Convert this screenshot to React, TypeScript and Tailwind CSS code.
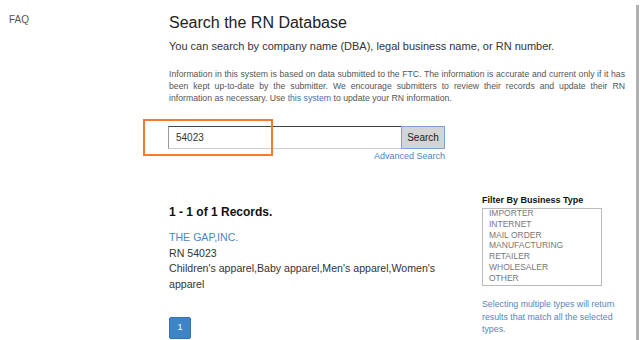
import React from "react"

const types = ["IMPORTER", "INTERNET", "MAIL ORDER", "MANUFACTURING", "RETAILER", "WHOLESALER", "OTHER"]

const App = () => {
  return (
    <div className="relative flex w-[640px] h-[340px] overflow-hidden bg-white font-['Liberation_Sans',Arial,sans-serif]">
      {/* SIDEBAR */}
      <div className="w-[169px] shrink-0 pl-[9px] pt-[6px]">
        <a className="text-[10px] text-[#555]">FAQ</a>
      </div>

      {/* MAIN */}
      <div className="w-[456px] shrink-0 flex flex-col">
        <h1 className="mt-[13px] text-[16px] leading-[20px] text-[#222]">Search the RN Database</h1>
        <p className="mt-[6px] text-[11px] leading-[15px] text-[#333]">
          You can search by company name (DBA), legal business name, or RN number.
        </p>
        <p className="mt-[14px] text-[8.7px] leading-[12px] text-[#555] text-justify">
          Information in this system is based on data submitted to the FTC. The information is accurate and current
          only if it has been kept up-to-date by the submitter. We encourage submitters to review their records and
          update their RN information as necessary. Use <a className="text-[#3d72b4]">this system</a> to update your
          RN information.
        </p>

        {/* SEARCH */}
        <div className="relative mt-[22px] ml-[-1px] w-[277px]">
          <div className="flex h-[23px]">
            <input
              readOnly
              value="54023"
              className="w-[233px] h-full px-[7px] text-[10px] text-[#333] border border-t-[#444] border-l-[#999] border-b-[#ccc] border-r-0 outline-none"
            />
            <button className="w-[44px] h-full bg-[#d4d4d4] border border-[#7d9fd6] text-[10px] text-[#222]">
              Search
            </button>
          </div>
          <div className="text-right text-[9px] leading-[14px] text-[#4a86c5]">Advanced Search</div>
          {/* highlight */}
          <div className="absolute left-[-25px] top-[-7px] w-[130px] h-[37px] border-2 border-[#f47c30]" />
        </div>

        {/* RESULTS + FILTER */}
        <div className="flex mt-[30px]">
          <div className="w-[313px] shrink-0 pr-[30px] pt-[11px]">
            <h2 className="text-[12px] leading-[16px] font-bold text-[#111]">1 - 1 of 1 Records.</h2>
            <div className="mt-[10px] text-[10.6px] leading-[15.5px] text-[#333]">
              <a className="block text-[#4a86c5]">THE GAP,INC.</a>
              <div>RN 54023</div>
              <div>Children's apparel,Baby apparel,Men's apparel,Women's apparel</div>
            </div>
            <button className="mt-[25px] w-[22px] h-[22px] rounded-[2px] bg-[#3d85c6] border border-[#3272ad] text-[9px] text-white">
              1
            </button>
          </div>
          <div className="w-[142px] shrink-0 pt-[1px]">
            <div className="text-[9px] leading-[12px] font-bold text-[#111]">Filter By Business Type</div>
            <div className="mt-[2px] w-[120px] h-[78px] overflow-hidden border border-[#bbb]">
              <div className="mt-[-1px] pl-[6px]">
                {types.map((t) => (
                  <div key={t} className="text-[8.5px] leading-[10.8px] text-[#777]">
                    {t}
                  </div>
                ))}
              </div>
            </div>
            <p className="mt-[12px] text-[8.8px] leading-[12.5px] text-[#5b84b8]">
              Selecting multiple types will return results that match all the selected types.
            </p>
          </div>
        </div>
      </div>

      {/* RIGHT EDGE */}
      <div className="ml-auto mr-[1px] mt-[5px] w-[3px] bg-[#b0b0b0]" />
    </div>
  )
}

export default App
